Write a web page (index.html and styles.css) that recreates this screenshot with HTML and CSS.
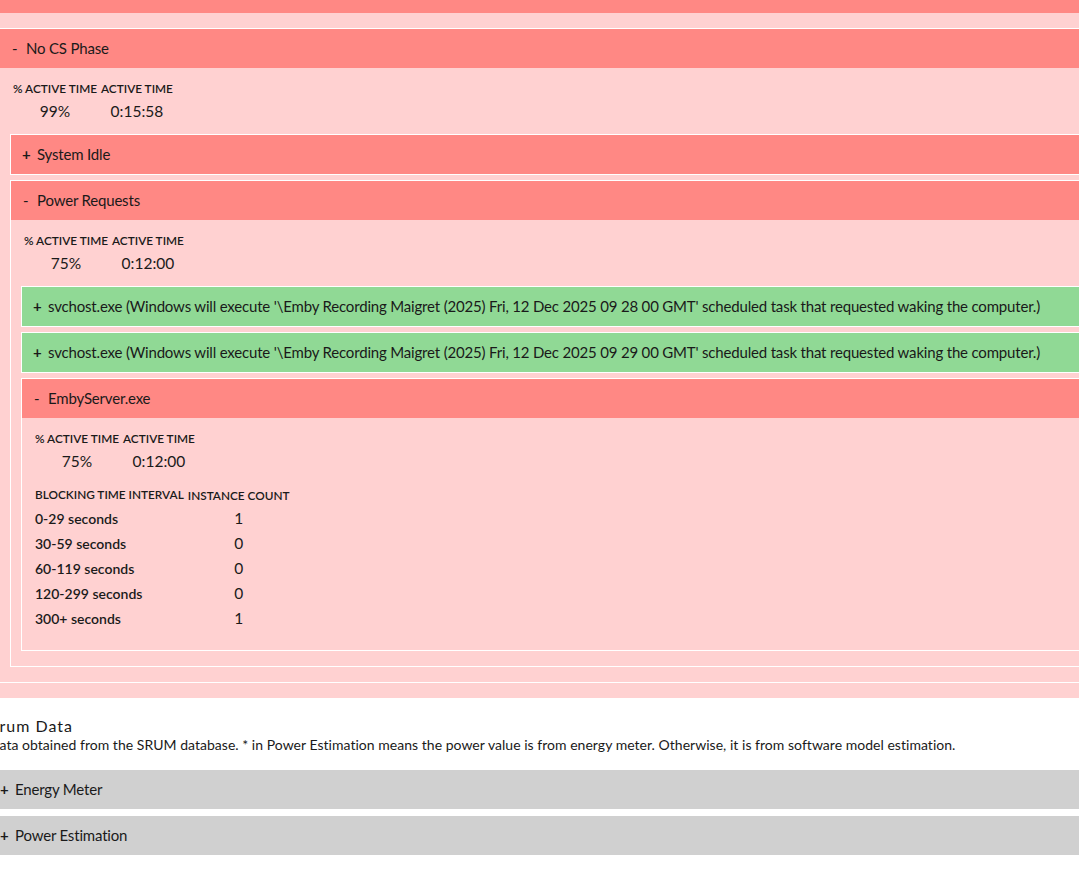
FILE: index.html
```html
<!DOCTYPE html>
<html>
<head>
<meta charset="utf-8">
<title>Sleep Study</title>
<link rel="stylesheet" href="styles.css">
</head>
<body>
<div class="page">
  <div class="box red top">
    <div class="hdr"></div>
    <div class="body">
      <div class="box red">
        <div class="hdr"><span class="sign minus">-</span>No CS Phase</div>
        <div class="body">
          <table class="stats">
            <tr><th>% Active Time</th><th>Active Time</th></tr>
            <tr><td>99%</td><td>0:15:58</td></tr>
          </table>
          <div class="box red">
            <div class="hdr"><span class="sign">+</span>System Idle</div>
          </div>
          <div class="box red">
            <div class="hdr"><span class="sign minus">-</span>Power Requests</div>
            <div class="body">
              <table class="stats">
                <tr><th>% Active Time</th><th>Active Time</th></tr>
                <tr><td>75%</td><td>0:12:00</td></tr>
              </table>
              <div class="box green">
                <div class="hdr"><span class="sign">+</span>svchost.exe (Windows will execute '\Emby Recording Maigret (2025) Fri, 12 Dec 2025 09 28 00 GMT' scheduled task that requested waking the computer.)</div>
              </div>
              <div class="box green">
                <div class="hdr"><span class="sign">+</span>svchost.exe (Windows will execute '\Emby Recording Maigret (2025) Fri, 12 Dec 2025 09 29 00 GMT' scheduled task that requested waking the computer.)</div>
              </div>
              <div class="box red">
                <div class="hdr"><span class="sign minus">-</span>EmbyServer.exe</div>
                <div class="body">
                  <table class="stats">
                    <tr><th>% Active Time</th><th>Active Time</th></tr>
                    <tr><td>75%</td><td>0:12:00</td></tr>
                  </table>
                  <table class="blocking">
                    <tr><th class="first">Blocking Time Interval</th><th>Instance Count</th></tr>
                    <tr><th class="row">0-29 seconds</th><td>1</td></tr>
                    <tr><th class="row">30-59 seconds</th><td>0</td></tr>
                    <tr><th class="row">60-119 seconds</th><td>0</td></tr>
                    <tr><th class="row">120-299 seconds</th><td>0</td></tr>
                    <tr><th class="row">300+ seconds</th><td>1</td></tr>
                  </table>
                </div>
              </div>
            </div>
          </div>
        </div>
      </div>
    </div>
  </div>

  <h2 class="sec-title">Srum Data</h2>
  <div class="sec-desc">Data obtained from the SRUM database. * in Power Estimation means the power value is from energy meter. Otherwise, it is from software model estimation.</div>
  <div class="box gray">
    <div class="hdr"><span class="sign">+</span>Energy Meter</div>
  </div>
  <div class="box gray">
    <div class="hdr"><span class="sign">+</span>Power Estimation</div>
  </div>
</div>
</body>
</html>
```

FILE: styles.css
```css
html, body {
  margin: 0;
  padding: 0;
  background: #ffffff;
  overflow: hidden;
}

body {
  font-family: Lato, "Segoe UI", "Noto Sans", sans-serif;
  color: #1a1a1a;
}

.page {
  margin: -27px 0 0 -12px;
  width: 1150px;
}

.box {
  border: 1px solid #ffffff;
  margin: 5px 0;
}

.box.top {
  margin: 0;
}

.box.red {
  background: #ffd1d1;
}

.hdr {
  height: 39px;
  line-height: 39px;
  padding-left: 11px;
  font-size: 15px;
  letter-spacing: -0.18px;
  white-space: nowrap;
  overflow: hidden;
}

.red > .hdr {
  background: #ff8884;
}

.green > .hdr {
  background: #90d995;
}

.gray > .hdr {
  background: #d0d0d0;
}

.sign {
  display: inline-block;
  width: 15px;
  font-weight: 700;
  letter-spacing: 0;
}

.sign.minus {
  font-weight: 400;
  padding-left: 1px;
  width: 14px;
}

.body {
  padding: 10px;
}

table {
  border-spacing: 2px;
}

table th {
  font-size: 11.8px;
  font-weight: 600;
  text-transform: uppercase;
  line-height: 15px;
  padding: 1px;
  text-align: center;
  white-space: nowrap;
}

table td {
  font-size: 15.5px;
  line-height: 22px;
  padding: 1px;
  text-align: center;
}

.stats {
  margin-bottom: 9px;
}

.blocking {
  margin-bottom: 8px;
}

.blocking th.first {
  text-align: left;
  padding-bottom: 3px;
}

.blocking th.row {
  text-align: left;
  text-transform: none;
  font-size: 14px;
  line-height: 21px;
}

.blocking td {
  line-height: 21px;
}

.sec-title {
  margin: 17px 0 0 2px;
  font-size: 16px;
  font-weight: 400;
  letter-spacing: 1px;
  line-height: 20px;
}

.sec-desc {
  margin: 0 0 16px 1px;
  font-size: 14px;
  letter-spacing: 0.03px;
  line-height: 17px;
}
```
